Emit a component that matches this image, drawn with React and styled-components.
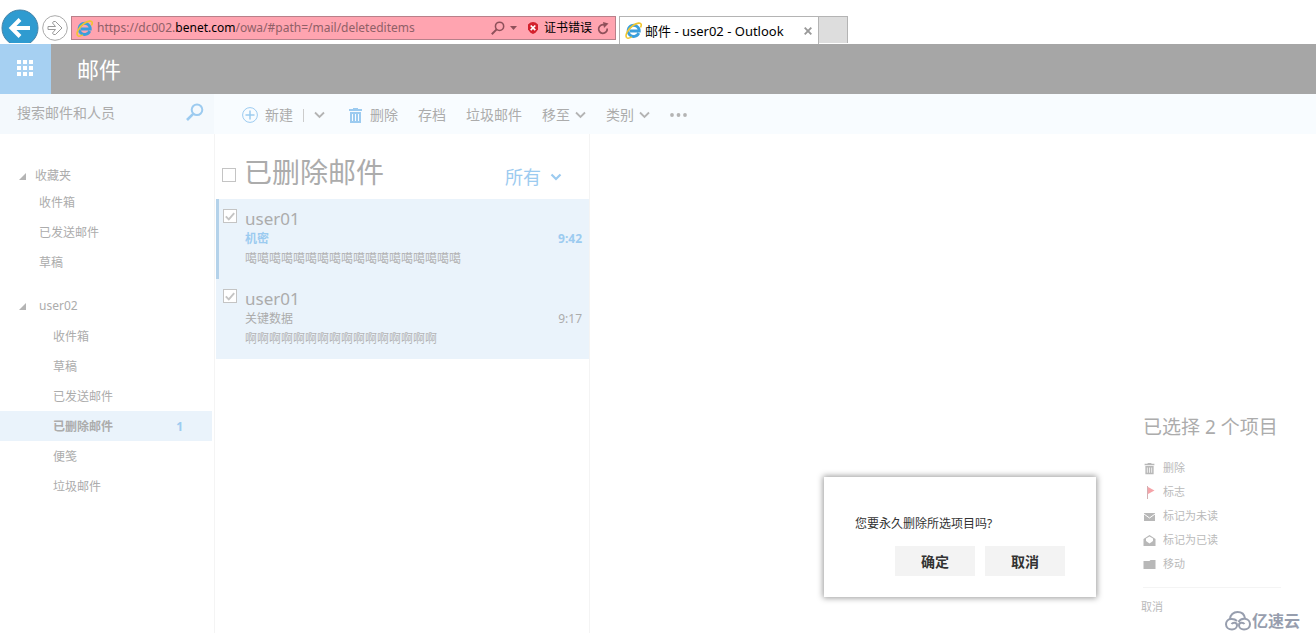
import React, { Component } from 'react';
import styled, { createGlobalStyle } from 'styled-components';

const GlobalStyle = createGlobalStyle`
	* {
		box-sizing: border-box;
	}
	body {
		margin: 0;
		background: #ffffff;
		font-family: "Noto Sans", "Noto Sans CJK SC", sans-serif;
		font-size: 12px;
		color: #acacac;
	}
	button, input {
		font-family: inherit;
		padding: 0;
		border: none;
		background: none;
		color: inherit;
	}
	button {
		cursor: pointer;
	}
	svg {
		display: block;
		flex: none;
	}
	h1, h2, p, ul {
		margin: 0;
		padding: 0;
		font-weight: normal;
	}
	ul {
		list-style: none;
	}
`;

const Page = styled.div`
	display: flex;
	flex-direction: column;
	min-height: 100vh;
	position: relative;
	overflow: hidden;
`;

/* browser chrome */

const Browser = styled.div`
	display: flex;
	align-items: flex-end;
	height: 44px;
	padding-left: 1px;
	overflow: hidden;
`;

const NavButtons = styled.div`
	display: flex;
	align-items: center;
	align-self: flex-start;
	gap: 3px;
	width: 70px;
	height: 43px;
	padding-top: 12px;
	overflow: hidden;
`;

const NavButton = styled.button`
	display: flex;
`;

const AddressBar = styled.div`
	display: flex;
	align-items: center;
	flex: 0 1 545px;
	height: 24px;
	margin-bottom: 4px;
	padding: 0 6px 0 4px;
	background: #ffa4b0;
	border: 1px solid #b8808a;
	font-size: 12px;
	line-height: 20px;
	color: #8f6067;
`;

const Url = styled.div`
	flex: 1;
	padding-left: 4px;
	white-space: nowrap;
	overflow: hidden;
`;

const Domain = styled.span`
	color: #000000;
`;

const AddressButton = styled.button`
	display: flex;
	align-items: center;
	gap: 5px;
	margin-left: ${props => props.$gap || '5px'};
	font-size: 12px;
	line-height: 20px;
	color: #000000;
`;

const Tab = styled.div`
	display: flex;
	align-items: center;
	flex: 0 1 200px;
	height: 28px;
	margin-left: 3px;
	padding: 0 6px 0 5px;
	border: 1px solid #b4b4b4;
	border-bottom: none;
	font-size: 13px;
	line-height: 20px;
	color: #000000;
	white-space: nowrap;
`;

const TabTitle = styled.span`
	flex: 1;
	padding-left: 3px;
`;

const NewTab = styled.button`
	width: 29px;
	height: 27px;
	margin-bottom: 1px;
	background: #dddddd;
	border: 1px solid #b4b4b4;
	border-left: none;
	border-bottom: none;
`;

/* mail header */

const Header = styled.header`
	display: flex;
	align-items: center;
	height: 50px;
	background: #a6a6a6;
`;

const AppLauncher = styled.button`
	display: flex;
	align-items: center;
	justify-content: center;
	width: 51px;
	height: 50px;
	padding: 0 2px 2px 0;
	background: #a6d0f2;
`;

const AppName = styled.h1`
	padding-left: 26px;
	font-size: 22px;
	line-height: 30px;
	color: #ffffff;
`;

const Commands = styled.div`
	display: flex;
	height: 40px;
	background: #f8fcff;
`;

const Search = styled.div`
	display: flex;
	align-items: center;
	width: 214px;
	padding: 0 10px 4px 17px;
	background: #f4f9fd;
`;

const SearchInput = styled.input`
	flex: 1;
	min-width: 0;
	height: 24px;
	font-size: 14px;
	outline: none;
	&::placeholder {
		color: #acacac;
		opacity: 1;
	}
`;

const Toolbar = styled.div`
	display: flex;
	align-items: center;
	gap: 20px;
	padding: 2px 0 0 28px;
`;

const ToolGroup = styled.div`
	display: flex;
	align-items: center;
	gap: 10px;
	margin-right: 4px;
`;

const Separator = styled.span`
	width: 1px;
	height: 13px;
	background: #cccccc;
`;

const ToolButton = styled.button`
	display: flex;
	align-items: center;
	gap: ${props => props.$gap || '5px'};
	font-size: 14px;
	line-height: 20px;
	white-space: nowrap;
`;

/* three panes */

const Main = styled.main`
	display: flex;
	flex: 1;
`;

const Folders = styled.nav`
	width: 215px;
	padding-top: 31px;
	border-right: 1px solid #f4f4f4;
`;

const FolderGroup = styled.section`
	margin-bottom: 14px;
`;

const GroupTitle = styled.button`
	display: flex;
	align-items: center;
	gap: ${props => props.$gap};
	height: ${props => props.$height};
	padding-left: 19px;
	font-size: 12px;
	line-height: 20px;
`;

const Folder = styled.a`
	display: flex;
	justify-content: space-between;
	align-items: center;
	height: 30px;
	margin-right: 2px;
	padding: 0 29px 0 ${props => props.$indent};
	font-weight: ${props => props.$active ? 'bold' : 'normal'};
	background: ${props => props.$active ? '#eaf3fb' : 'transparent'};
	color: inherit;
	text-decoration: none;
`;

const Unread = styled.span`
	color: #9ccbf0;
`;

const MessageList = styled.section`
	width: 375px;
	padding-left: 1px;
	border-right: 1px solid #f4f4f4;
`;

const ListHeader = styled.div`
	display: flex;
	align-items: center;
	height: 65px;
	padding: 16px 27px 0 6px;
`;

const ListTitle = styled.h2`
	flex: 1;
	padding: 0 0 6px 8px;
	font-size: 28px;
	line-height: 36px;
`;

const Filter = styled.button`
	display: flex;
	align-items: center;
	gap: 9px;
	padding-top: 4px;
	font-size: 18px;
	line-height: 24px;
	color: #9ccbf0;
`;

const Message = styled.li`
	display: flex;
	align-items: flex-start;
	height: 80px;
	padding: 10px 7px 0 4px;
	border-left: 3px solid ${props => props.$current ? '#b4d2ea' : '#eaf3fb'};
	background: #eaf3fb;
`;

const MessageBody = styled.div`
	flex: 1;
	padding-left: 8px;
`;

const Sender = styled.div`
	font-size: 17px;
	line-height: 20px;
`;

const SubjectRow = styled.div`
	display: flex;
	justify-content: space-between;
	line-height: 20px;
	font-weight: ${props => props.$unread ? 'bold' : 'normal'};
	color: ${props => props.$unread ? '#9ccbf0' : 'inherit'};
`;

const Preview = styled.p`
	line-height: 20px;
	color: #b4b4b4;
`;

const CheckLabel = styled.label`
	display: grid;
	place-items: center;
	width: 14px;
	height: 14px;
	& > * {
		grid-area: 1 / 1;
	}
`;

const Check = styled.input`
	appearance: none;
	width: 14px;
	height: 14px;
	margin: 0;
	border: 1px solid #c4c4c4;
	background: #ffffff;
`;

const Reading = styled.section`
	display: flex;
	flex: 1;
	flex-direction: column;
	justify-content: flex-end;
	align-items: flex-end;
	padding: 0 35px 16px 0;
`;

const Selection = styled.div`
	width: 138px;
`;

const SelectionTitle = styled.h2`
	margin-bottom: 14px;
	font-size: 19px;
	line-height: 30px;
	white-space: nowrap;
`;

const SelectionAction = styled.button`
	display: flex;
	align-items: center;
	gap: 7px;
	height: 24px;
	font-size: 11px;
	line-height: 20px;
	color: #bababa;
`;

const SelectionFooter = styled.div`
	margin-top: 11px;
	padding-top: 9px;
	border-top: 1px solid #f4f4f4;
`;

const CancelSelection = styled.button`
	display: block;
	margin-left: -2px;
	font-size: 11px;
	line-height: 20px;
	color: #bababa;
`;

/* floats over the page */

const Dialog = styled.div`
	position: absolute;
	right: 220px;
	bottom: 36px;
	width: 272px;
	padding: 37px 31px 21px;
	background: #ffffff;
	box-shadow: 0 0 6px 1px rgba(0, 0, 0, 0.4);
	color: #333333;
`;

const Question = styled.p`
	margin-bottom: 12px;
	line-height: 20px;
`;

const DialogButtons = styled.div`
	display: flex;
	justify-content: flex-end;
	gap: 10px;
`;

const DialogButton = styled.button`
	width: 80px;
	height: 30px;
	background: #f3f3f3;
	font-size: 14px;
	font-weight: bold;
`;

const Watermark = styled.div`
	position: absolute;
	right: 16px;
	bottom: 2px;
	display: flex;
	align-items: center;
	gap: 1px;
	font-size: 16px;
	font-weight: bold;
	line-height: 20px;
	color: #979eae;
`;

/* icons */

const BackIcon = () => (
	<svg width="38" height="38" viewBox="0 0 38 38">
		<circle cx="19" cy="19" r="18" fill="#2f9bd0" stroke="#4583a8" />
		<path d="M29 19H11M19 10.500L10.500 19l8.500 8.500" fill="none" stroke="#fff" strokeWidth="4" />
	</svg>
);

const ForwardIcon = () => (
	<svg width="26" height="26" viewBox="0 0 26 26">
		<circle cx="13" cy="13" r="12.300" fill="#fff" stroke="#aaa" />
		<path d="M6 11.500h7.500L10.500 8l1-1.500h2L20 13l-6.500 6.500h-2l-1-1.500 3-3.500H6z" fill="#fff" stroke="#999" />
	</svg>
);

const IeIcon = () => (
	<svg width="17" height="17" viewBox="0 0 17 17">
		<path d="M13.800 11.200A5.600 5.600 0 1 1 14.300 9H5" fill="none" stroke="#3a9fdc" strokeWidth="2.800" />
		<path d="M1.800 15.800C-.5 13.500 3 7 8 3.500c4-2.800 8-3.300 8.200-.8.100.8-.2 1.800-.7 2.800" fill="none" stroke="#f0c530" strokeWidth="1.600" />
		<path d="M1.800 15.800c1 .8 3 .2 5-1" fill="none" stroke="#f0c530" strokeWidth="1.400" />
	</svg>
);

const SearchIcon = ({ size, color, width }) => (
	<svg width={size} height={size} viewBox="0 0 18 18">
		<circle cx="11" cy="6.800" r="5.300" fill="none" stroke={color} strokeWidth={width} />
		<path d="M7.200 10.800L1 17" stroke={color} strokeWidth={width + 0.6} />
	</svg>
);

const CertErrorIcon = () => (
	<svg width="12" height="12" viewBox="0 0 12 12">
		<path d="M3.500 0.500L6 0l2.500.5L11 2.500v5L8.500 10.800 6 12l-2.500-1.200L1 7.500v-5z" fill="#d3202c" />
		<path d="M3.700 3.500l4.600 4.600M8.300 3.500L3.700 8.100" stroke="#fff" strokeWidth="1.700" />
	</svg>
);

const RefreshIcon = () => (
	<svg width="12" height="13" viewBox="0 0 12 13">
		<path d="M10.200 6.500A4.300 4.300 0 1 1 7.500 3" fill="none" stroke="#8f505a" strokeWidth="1.700" />
		<path d="M6 0l5.500 1.500L7 6z" fill="#8f505a" />
	</svg>
);

const DropIcon = () => (
	<svg width="7" height="4" viewBox="0 0 7 4"><path d="M0 0h7L3.500 4z" fill="#8f505a" /></svg>
);

const CloseIcon = () => (
	<svg width="8" height="8" viewBox="0 0 8 8">
		<path d="M.7.7l6.600 6.600M7.300.7L.7 7.300" stroke="#999" strokeWidth="1.900" />
	</svg>
);

const WaffleIcon = () => (
	<svg width="16" height="16" viewBox="0 0 16 16" fill="#fff">
		{[0, 6, 12].map(y => [0, 6, 12].map(x => (
			<rect key={`${x}-${y}`} x={x} y={y} width="4" height="4" />
		)))}
	</svg>
);

const PlusIcon = () => (
	<svg width="16" height="16" viewBox="0 0 16 16" fill="none" stroke="#9ccbf0">
		<circle cx="8" cy="8" r="7.400" />
		<path d="M8 3.500v9M3.500 8h9" strokeWidth="1.500" />
	</svg>
);

const ChevronIcon = ({ color = '#b4b4b4', width = 11, stroke = 1.8 }) => (
	<svg width={width} height="8" viewBox="0 0 11 8">
		<path d="M1 1.500l4.500 4.500L10 1.500" fill="none" stroke={color} strokeWidth={stroke} />
	</svg>
);

const TrashIcon = ({ color, scale = 1 }) => (
	<svg width="13" height="15" viewBox="0 0 13 15" fill={color}>
		<g transform={`translate(${6.5 - 6.5 * scale} ${7.5 - 7.5 * scale}) scale(${scale})`}>
			<path d="M4 0h5v1h4v2H0V1h4z" />
			<path fillRule="evenodd" d="M1 4h11v11H1zM3 6v7h1V6zM6 6v7h1V6zM9 6v7h1V6z" />
		</g>
	</svg>
);

const DotsIcon = () => (
	<svg width="17" height="4" viewBox="0 0 17 4" fill="#b4b4b4">
		<circle cx="2" cy="2" r="1.900" />
		<circle cx="8.500" cy="2" r="1.900" />
		<circle cx="15" cy="2" r="1.900" />
	</svg>
);

const TriangleIcon = () => (
	<svg width="7" height="7" viewBox="0 0 7 7"><path d="M7 0v7H0z" fill="#b4b4b4" /></svg>
);

const TickIcon = () => (
	<svg width="10" height="9" viewBox="0 0 10 9" pointerEvents="none">
		<path d="M.8 4.300L3.800 7.300 9.200 1.200" fill="none" stroke="#c4c4c4" strokeWidth="1.900" />
	</svg>
);

const FlagIcon = () => (
	<svg width="13" height="13" viewBox="0 0 13 13">
		<path d="M4.500 0v13" stroke="#d3b0b3" />
		<path d="M5 1l6.500 3.500L5 8z" fill="#f5a3a8" />
	</svg>
);

const MailIcon = () => (
	<svg width="13" height="13" viewBox="0 0 13 13">
		<path d="M1 3h11v8H1z" fill="#b8b8b8" />
		<path d="M1 4l5.500 4L12 4" fill="none" stroke="#fff" />
	</svg>
);

const OpenMailIcon = () => (
	<svg width="13" height="13" viewBox="0 0 13 13">
		<path d="M6.500 1L12.500 5v7H.5V5z" fill="#b8b8b8" />
		<path d="M3 4.500L6.500 2.500 10 4.500V7L6.500 9.500 3 7z" fill="#fff" />
	</svg>
);

const FolderIcon = () => (
	<svg width="13" height="13" viewBox="0 0 13 13">
		<path d="M.5 3h6l1-1h5v9H.5z" fill="#b8b8b8" />
	</svg>
);

const CloudIcon = () => (
	<svg width="26" height="20" viewBox="0 0 26 20" fill="none" stroke="#979eae" strokeWidth="2">
		<path d="M5 8C5 4 8.500 1 12.500 1S19.500 3.500 20 7.500" />
		<path d="M6.500 13c1.500-2 5.500-1.800 5.500 1.200 0 2.500-2.200 4.300-5 4.300-3.500 0-6-2.300-6-5.200C1 10.500 3 8.200 6 8c2.500-.2 4.500.5 6 2" />
		<path d="M19.500 13c-1.500-2-5.500-1.800-5.500 1.200 0 2.500 2.200 4.300 5 4.300 3.500 0 6-2.300 6-5.200C25 10.500 23 8 20 7.700c-3-.3-5.500 1.300-6.500 3.300" />
	</svg>
);

const Checkbox = ({ label, checked }) => (
	<CheckLabel>
		<Check type="checkbox" aria-label={label} defaultChecked={checked} />
		{checked && <TickIcon />}
	</CheckLabel>
);

const favorites = ['收件箱', '已发送邮件', '草稿'];

const folders = [
	{ name: '收件箱' },
	{ name: '草稿' },
	{ name: '已发送邮件' },
	{ name: '已删除邮件', unread: 1, active: true },
	{ name: '便笺' },
	{ name: '垃圾邮件' },
];

const messages = [
	{ sender: 'user01', subject: '机密', time: '9:42', preview: '噶'.repeat(18), unread: true },
	{ sender: 'user01', subject: '关键数据', time: '9:17', preview: '啊'.repeat(16) },
];

const actions = [
	{ label: '删除', icon: <TrashIcon color="#b8b8b8" scale={0.75} /> },
	{ label: '标志', icon: <FlagIcon /> },
	{ label: '标记为未读', icon: <MailIcon /> },
	{ label: '标记为已读', icon: <OpenMailIcon /> },
	{ label: '移动', icon: <FolderIcon /> },
];

export default class App extends Component {
	renderBrowser() {
		return (
			<Browser>
				<NavButtons>
					<NavButton aria-label="后退"><BackIcon /></NavButton>
					<NavButton aria-label="前进"><ForwardIcon /></NavButton>
				</NavButtons>
				<AddressBar>
					<IeIcon />
					<Url>https://dc002.<Domain>benet.com</Domain>/owa/#path=/mail/deleteditems</Url>
					<AddressButton aria-label="搜索">
						<SearchIcon size={14} color="#8f505a" width={2} />
						<DropIcon />
					</AddressButton>
					<AddressButton $gap="10px"><CertErrorIcon />证书错误</AddressButton>
					<AddressButton aria-label="刷新"><RefreshIcon /></AddressButton>
				</AddressBar>
				<Tab>
					<IeIcon />
					<TabTitle>邮件 - user02 - Outlook</TabTitle>
					<NavButton aria-label="关闭"><CloseIcon /></NavButton>
				</Tab>
				<NewTab aria-label="新选项卡" />
			</Browser>
		)
	}

	renderCommands() {
		return (
			<Commands>
				<Search>
					<SearchInput type="text" aria-label="搜索邮件和人员" placeholder="搜索邮件和人员" />
					<NavButton aria-label="搜索"><SearchIcon size={18} color="#9ccbf0" width={2} /></NavButton>
				</Search>
				<Toolbar>
					<ToolGroup>
						<ToolButton $gap="7px"><PlusIcon />新建</ToolButton>
						<Separator />
						<ToolButton aria-label="更多新建选项"><ChevronIcon /></ToolButton>
					</ToolGroup>
					<ToolButton $gap="8px"><TrashIcon color="#9ccbf0" />删除</ToolButton>
					<ToolButton>存档</ToolButton>
					<ToolButton>垃圾邮件</ToolButton>
					<ToolButton>移至<ChevronIcon /></ToolButton>
					<ToolButton>类别<ChevronIcon /></ToolButton>
					<ToolButton aria-label="更多"><DotsIcon /></ToolButton>
				</Toolbar>
			</Commands>
		)
	}

	renderFolders() {
		return (
			<Folders>
				<FolderGroup>
					<GroupTitle $gap="9px" $height="22px"><TriangleIcon />收藏夹</GroupTitle>
					{favorites.map(name => (
						<Folder key={name} href="#" $indent="39px">{name}</Folder>
					))}
				</FolderGroup>
				<FolderGroup>
					<GroupTitle $gap="13px" $height="30px"><TriangleIcon />user02</GroupTitle>
					{folders.map(folder => (
						<Folder key={folder.name} href="#" $indent="53px" $active={folder.active}>
							{folder.name}
							{folder.unread && <Unread>{folder.unread}</Unread>}
						</Folder>
					))}
				</FolderGroup>
			</Folders>
		)
	}

	renderMessages() {
		return (
			<MessageList>
				<ListHeader>
					<Checkbox label="全选" />
					<ListTitle>已删除邮件</ListTitle>
					<Filter>所有<ChevronIcon color="#9ccbf0" width={12} stroke={2.2} /></Filter>
				</ListHeader>
				<ul>
					{messages.map(message => (
						<Message key={message.time} $current={message.unread}>
							<Checkbox label={message.subject} checked />
							<MessageBody>
								<Sender>{message.sender}</Sender>
								<SubjectRow $unread={message.unread}>
									<span>{message.subject}</span>
									<span>{message.time}</span>
								</SubjectRow>
								<Preview>{message.preview}</Preview>
							</MessageBody>
						</Message>
					))}
				</ul>
			</MessageList>
		)
	}

	render() {
		return (
			<Page>
				<GlobalStyle />
				{this.renderBrowser()}
				<Header>
					<AppLauncher aria-label="应用启动器"><WaffleIcon /></AppLauncher>
					<AppName>邮件</AppName>
				</Header>
				{this.renderCommands()}
				<Main>
					{this.renderFolders()}
					{this.renderMessages()}
					<Reading>
						<Selection>
							<SelectionTitle>已选择 2 个项目</SelectionTitle>
							{actions.map(action => (
								<SelectionAction key={action.label}>{action.icon}{action.label}</SelectionAction>
							))}
							<SelectionFooter>
								<CancelSelection>取消</CancelSelection>
							</SelectionFooter>
						</Selection>
					</Reading>
				</Main>
				<Dialog role="dialog" aria-label="删除项目">
					<Question>您要永久删除所选项目吗?</Question>
					<DialogButtons>
						<DialogButton>确定</DialogButton>
						<DialogButton>取消</DialogButton>
					</DialogButtons>
				</Dialog>
				<Watermark><CloudIcon />亿速云</Watermark>
			</Page>
		)
	}
}
